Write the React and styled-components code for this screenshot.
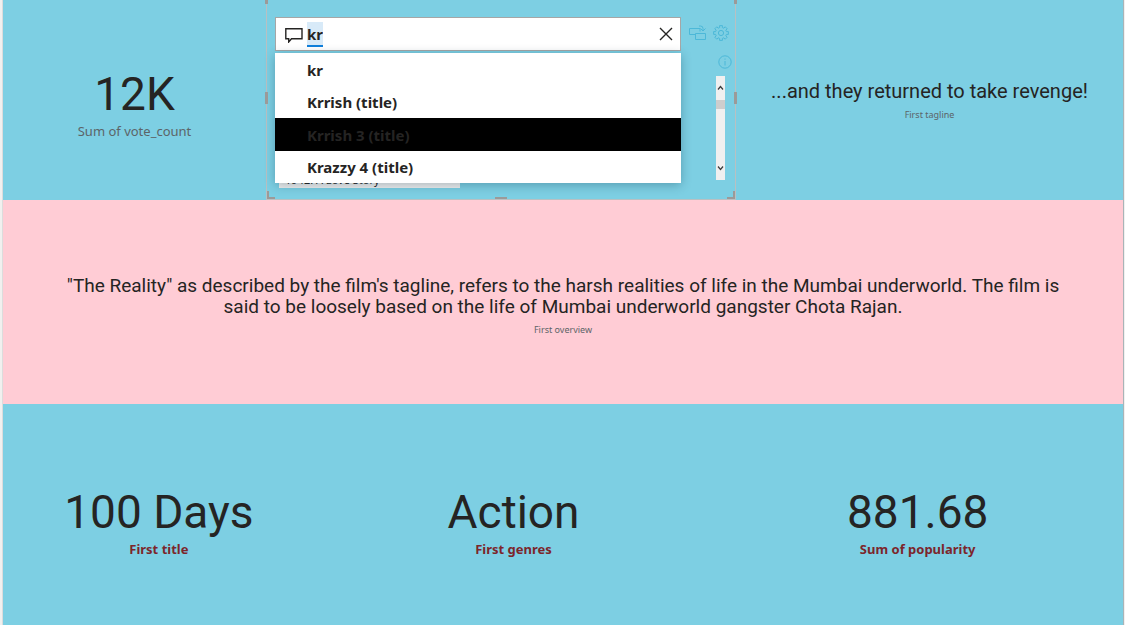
import React from "react";
import styled, { createGlobalStyle } from "styled-components";

const GlobalStyle = createGlobalStyle`
  *, *::before, *::after { box-sizing: border-box; }
  body { margin: 0; background: #f1f0ef; }
`;

const uiFont = `"Noto Sans", "Open Sans", sans-serif`;
const dinFont = `Roboto, "Liberation Sans", sans-serif`;

const Report = styled.main`
  display: grid;
  grid-template-rows: 200px 204px minmax(221px, 1fr);
  min-height: 100vh;
  margin: 0 1px 0 2px;
  border-left: 1px solid #dcdcdc;
  border-right: 1px solid #a9b4b8;
  font-family: ${uiFont};
  color: #252423;
`;

const Band = styled.section`
  display: grid;
  grid-template-columns: ${(p) => p.$columns};
  background: ${(p) => (p.$tone === "pink" ? "#ffccd5" : "#7dcfe3")};
`;

const Card = styled.article`
  display: flex;
  flex-direction: column;
  align-items: center;
  padding-top: ${(p) => p.$top}px;
  text-align: center;
`;

const BigValue = styled.div`
  font: 400 46px/56px ${dinFont};
`;

const TextValue = styled.div`
  max-width: 1024px;
  font: 400 ${(p) => p.$size}px/21px ${dinFont};
`;

const Caption = styled.div`
  font-size: ${(p) => (p.$small ? 9 : 13)}px;
  line-height: ${(p) => (p.$small ? 14 : 18)}px;
  margin-top: ${(p) => (p.$small ? 6 : 0)}px;
  color: #5c6468;
`;

const StrongCaption = styled(Caption)`
  font-weight: 700;
  color: #7c262b;
`;

const Visual = styled.article`
  position: relative;
  display: flex;
  align-items: flex-start;
  padding: 17px 4px 0 8px;
  border: 1px solid #b9c0c2;
  border-top: 0;
`;

const Handle = styled.span`
  position: absolute;
  border: 0 solid #9b9a99;
  ${(p) => p.$at}
`;

const handles = [
  "left:-2px; top:0; height:4px; border-left-width:3px;",
  "right:-2px; top:0; height:4px; border-left-width:3px;",
  "left:-2px; top:92px; height:12px; border-left-width:3px;",
  "right:-2px; top:92px; height:12px; border-left-width:3px;",
  "left:0; bottom:0; width:8px; height:8px; border-left-width:2px; border-bottom-width:2px;",
  "right:0; bottom:0; width:8px; height:8px; border-right-width:2px; border-bottom-width:2px;",
  "left:calc(50% - 6px); bottom:0; width:12px; border-bottom-width:2px;",
];

const QnA = styled.div`
  position: relative;
  flex: 1;
`;

const SearchBox = styled.label`
  display: flex;
  align-items: center;
  height: 34px;
  padding: 0 6px 0 9px;
  gap: 4px;
  background: #fff;
  border: 1px solid #a6a6a6;
`;

const Query = styled.input`
  field-sizing: content;
  width: auto;
  height: 25px;
  padding: 2px 0 0;
  border: 0;
  border-bottom: 2px solid #1080dc;
  outline: 0;
  background: #d8eaf8;
  font: 700 15px/21px ${uiFont};
  color: #252423;
`;

const IconButton = styled.button`
  display: flex;
  padding: 0;
  border: 0;
  background: none;
  color: ${(p) => p.$color || "#252423"};
  margin-left: ${(p) => (p.$end ? "auto" : 0)};
`;

const Suggestions = styled.ul`
  position: absolute;
  top: 36px;
  left: 0;
  right: 0;
  margin: 0;
  padding: 0;
  list-style: none;
  background: #fff;
  box-shadow: 0 2px 10px rgba(0, 40, 60, 0.3);
`;

const Suggestion = styled.li`
  button {
    display: block;
    width: 100%;
    height: ${(p) => (p.$active ? 33 : 32)}px;
    padding: 0 32px;
    border: 0;
    background: ${(p) => (p.$active ? "#000" : "#fff")};
    font: 700 15px/32px ${uiFont};
    color: #252423;
    text-align: left;
  }
  &:first-child button { height: 33px; }
`;

const Result = styled.div`
  width: 181px;
  height: 135px;
  margin: 2px 0 0 4px;
  padding: 118px 6px 0;
  overflow: hidden;
  background: #efefef;
  font-size: 11px;
  line-height: 18px;
  white-space: nowrap;
`;

const Tools = styled.div`
  display: grid;
  grid-template-columns: 18px 16px;
  gap: 6px;
  width: 50px;
  padding: 8px 0 0 8px;
  color: #4cb8d8;
`;

const InfoRow = styled.div`
  grid-column: 1 / -1;
  display: flex;
  justify-content: flex-end;
  margin: 8px -3px 0 0;
`;

const ScrollTrack = styled.div`
  grid-column: 1 / -1;
  display: flex;
  flex-direction: column;
  justify-content: space-between;
  align-items: center;
  width: 9px;
  height: 104px;
  margin: 1px 0 0 27px;
  padding: 8px 0;
  color: #3b3b3b;
  background: linear-gradient(#f0f0f0 24px, #cdcdcd 24px, #cdcdcd 33px, #f0f0f0 33px);
`;

const Chevron = ({ d }) => (
  <svg width="7" height="7" viewBox="0 0 7 7" fill="none" stroke="currentColor" strokeWidth="1.2">
    <path d={d} />
  </svg>
);

const ChatIcon = () => (
  <svg width="18" height="17" viewBox="0 0 18 17" fill="none" stroke="#252423" strokeWidth="1.4">
    <path d="M.8 2.800H17v10H6.500L3.700 16v-3.200H.8z" />
  </svg>
);

const CloseIcon = () => (
  <svg width="16" height="16" viewBox="0 0 16 16" fill="none" stroke="currentColor" strokeWidth="1.4">
    <path d="M2 2l12 12M14 2L2 14" />
  </svg>
);

const ConvertIcon = () => (
  <svg width="18" height="16" viewBox="0 0 18 16" fill="none" stroke="currentColor">
    <path d="M6 9.500H.5v-6h10.500v3M6.500 8.500h10v6h-10zM10 1h1.500q2.500 0 2.500 2.500V5.500M11.500 3.500l2.500 2.500 2.500-2.500" />
  </svg>
);

const gearPath = Array.from({ length: 8 }, (_, i) =>
  [[-14, 5.6], [-11, 7.5], [11, 7.5], [14, 5.6]].map(([offset, radius]) => {
    const angle = ((i * 45 + offset) * Math.PI) / 180;
    return `${(8 + radius * Math.cos(angle)).toFixed(2)} ${(8 + radius * Math.sin(angle)).toFixed(2)}`;
  })
)
  .flat()
  .join("L");

const GearIcon = () => (
  <svg width="16" height="16" viewBox="0 0 16 16" fill="none" stroke="currentColor">
    <path d={`M${gearPath}z`} />
    <circle cx="8" cy="8" r="2.600" />
  </svg>
);

const InfoIcon = () => (
  <svg width="14" height="14" viewBox="0 0 14 14" fill="none" stroke="currentColor">
    <circle cx="7" cy="7" r="6.200" />
    <path d="M7 6v4.500M7 3.500v1.200" />
  </svg>
);

const suggestions = ["kr", "Krrish (title)", "Krrish 3 (title)", "Krazzy 4 (title)"];

const totals = [
  ["100 Days", "First title"],
  ["Action", "First genres"],
  ["881.68", "Sum of popularity"],
];

export default function App() {
  return (
    <>
      <GlobalStyle />
      <Report>
        <Band $columns="263fr 470fr 387fr">
          <Card $top={66}>
            <BigValue>12K</BigValue>
            <Caption>Sum of vote_count</Caption>
          </Card>
          <Visual>
            <QnA>
              <SearchBox>
                <ChatIcon />
                <Query defaultValue="kr" aria-label="Ask a question" />
                <IconButton $end aria-label="Clear">
                  <CloseIcon />
                </IconButton>
              </SearchBox>
              <Result>1942: A Love Story</Result>
              <Suggestions>
                {suggestions.map((text, i) => (
                  <Suggestion key={text} $active={i === 2}>
                    <button>{text}</button>
                  </Suggestion>
                ))}
              </Suggestions>
            </QnA>
            <Tools>
              <IconButton $color="inherit" aria-label="Convert to visual">
                <ConvertIcon />
              </IconButton>
              <IconButton $color="inherit" aria-label="Settings">
                <GearIcon />
              </IconButton>
              <InfoRow>
                <IconButton $color="inherit" aria-label="Information">
                  <InfoIcon />
                </IconButton>
              </InfoRow>
              <ScrollTrack>
                <Chevron d="M1 5.500l2.500-3 2.500 3" />
                <Chevron d="M1 1.500l2.500 3 2.500-3" />
              </ScrollTrack>
            </Tools>
            {handles.map((at) => (
              <Handle key={at} $at={at} />
            ))}
          </Visual>
          <Card $top={81}>
            <TextValue $size={20}>...and they returned to take revenge!</TextValue>
            <Caption $small>First tagline</Caption>
          </Card>
        </Band>
        <Band $tone="pink" $columns="1fr">
          <Card $top={75}>
            <TextValue $size={19}>
              "The Reality" as described by the film's tagline, refers to the harsh realities of life in
              the Mumbai underworld. The film is said to be loosely based on the life of Mumbai
              underworld gangster Chota Rajan.
            </TextValue>
            <Caption $small>First overview</Caption>
          </Card>
        </Band>
        <Band $columns="312fr 398fr 411fr">
          {totals.map(([value, label]) => (
            <Card key={label} $top={80}>
              <BigValue>{value}</BigValue>
              <StrongCaption>{label}</StrongCaption>
            </Card>
          ))}
        </Band>
      </Report>
    </>
  );
}
